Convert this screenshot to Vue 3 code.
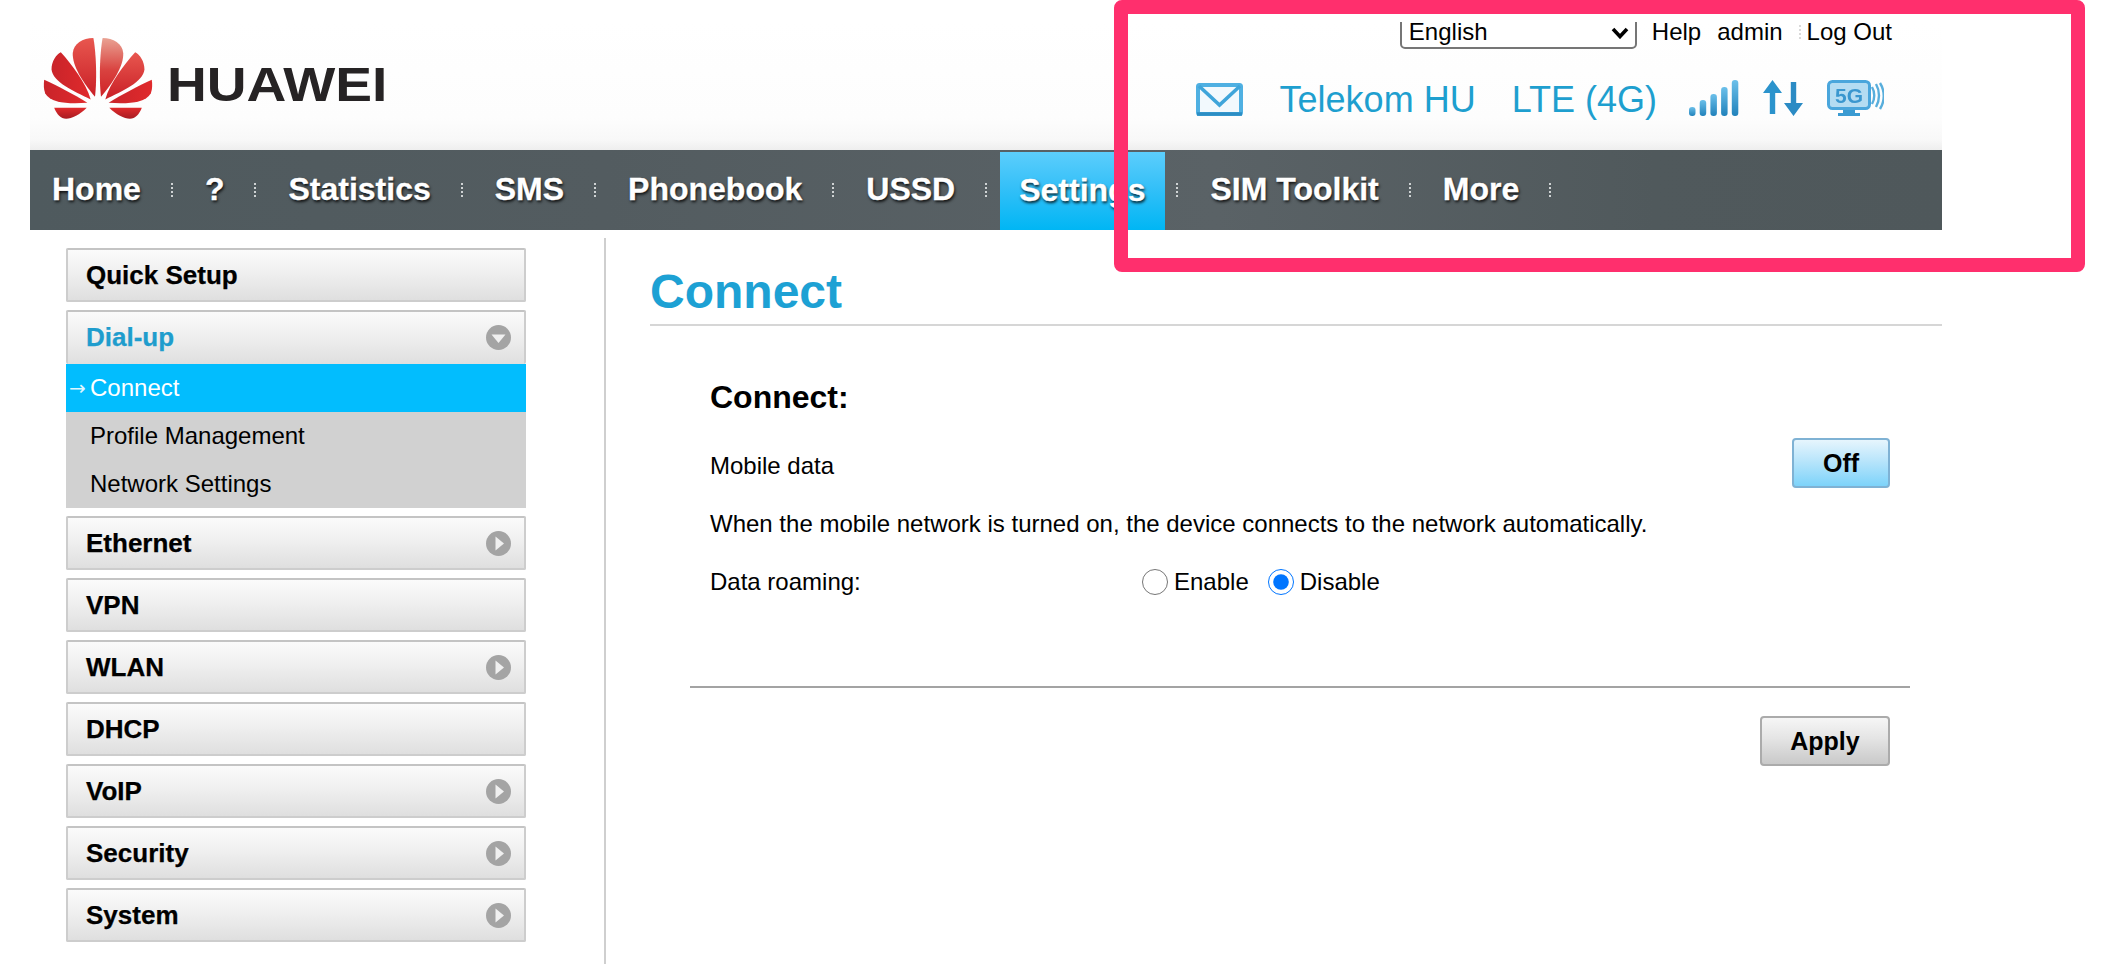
<script setup>
const navItems = [
  { label: 'Home' },
  { label: '?' },
  { label: 'Statistics' },
  { label: 'SMS' },
  { label: 'Phonebook' },
  { label: 'USSD' },
  { label: 'Settings', active: true },
  { label: 'SIM Toolkit' },
  { label: 'More' }
]
const menu = [
  { label: 'Quick Setup' },
  { label: 'Dial-up', open: true, icon: 'down', children: ['Connect', 'Profile Management', 'Network Settings'] },
  { label: 'Ethernet', icon: 'right' },
  { label: 'VPN' },
  { label: 'WLAN', icon: 'right' },
  { label: 'DHCP' },
  { label: 'VoIP', icon: 'right' },
  { label: 'Security', icon: 'right' },
  { label: 'System', icon: 'right' }
]
const bars = [
  { x: 0, h: 9 }, { x: 10.7, h: 16 }, { x: 21.4, h: 22 }, { x: 32.1, h: 29 }, { x: 42.8, h: 36 }
]
</script>

<template>
  <div class="page">
    <div class="frame">
      <header class="header">
        <div class="top-row">
          <div class="select-clip">
            <select class="lang"><option>English</option></select>
            <svg class="lang-chev" viewBox="0 0 18 12" width="18" height="12">
              <path d="M2 2L9 9.5L16 2" fill="none" stroke="#000" stroke-width="3.6" />
            </svg>
          </div>
          <a class="top-link help">Help</a>
          <a class="top-link admin">admin</a>
          <i class="top-sep"></i>
          <a class="top-link logout">Log Out</a>
        </div>
        <div class="brand-row">
          <div class="logo">
            <svg class="flower" viewBox="40 55 328 244" width="110" height="81">
              <defs>
                <linearGradient id="pa" x1="0" y1="0" x2="0" y2="1">
                  <stop offset="0" stop-color="#e8574f" />
                  <stop offset="1" stop-color="#c91f26" />
                </linearGradient>
                <linearGradient id="pb" x1="0" y1="0" x2="0" y2="1">
                  <stop offset="0" stop-color="#e9a293" />
                  <stop offset="0.55" stop-color="#d9423f" />
                  <stop offset="1" stop-color="#cf2227" />
                </linearGradient>
                <linearGradient id="pc" x1="0" y1="0" x2="1" y2="0">
                  <stop offset="0" stop-color="#c9242a" />
                  <stop offset="1" stop-color="#e02a2c" />
                </linearGradient>
                <linearGradient id="pd" x1="0" y1="0" x2="0" y2="1">
                  <stop offset="0" stop-color="#e12a2c" />
                  <stop offset="1" stop-color="#a81c22" />
                </linearGradient>
              </defs>
              <path fill="url(#pa)" d="M195 232C160 190 126 140 128 100C130 72 158 55 190 55C197 90 202 170 195 232Z" />
              <path fill="url(#pb)" d="M213 232C248 190 282 140 280 100C278 72 250 55 218 55C211 90 206 170 213 232Z" />
              <path fill="url(#pc)" d="M182 240C130 215 68 188 64 150C64 125 78 105 92 98C125 135 168 190 182 240Z" />
              <path fill="url(#pa)" d="M226 240C278 215 340 188 344 150C344 125 330 105 316 98C283 135 240 190 226 240Z" />
              <path fill="url(#pc)" d="M172 250C120 254 62 252 45 222C40 208 40 195 42 181C80 198 130 225 172 250Z" />
              <path fill="url(#pc)" d="M236 250C288 254 346 252 363 222C368 208 368 195 366 181C328 198 278 225 236 250Z" />
              <path fill="url(#pd)" d="M72 265L170 265C150 285 125 298 108 298C92 298 80 285 72 265Z" />
              <path fill="url(#pd)" d="M336 265L238 265C258 285 283 298 300 298C316 298 328 285 336 265Z" />
            </svg>
            <span class="wordmark">HUAWEI</span>
          </div>
          <div class="status">
            <svg class="ic-mail" viewBox="0 0 47 33" width="47" height="33">
              <rect x="2" y="2" width="43" height="29" rx="1.5" fill="#f2f9fd" stroke="#4fb0e2" stroke-width="4" />
              <path d="M3 3L23.5 22L44 3" fill="none" stroke="#3fa5da" stroke-width="3.6" />
              <path d="M1 31H46" stroke="#2c8ec4" stroke-width="3.6" />
            </svg>
            <span class="carrier">Telekom HU</span>
            <span class="network">LTE (4G)</span>
            <svg class="ic-signal" viewBox="0 0 50 36" width="50" height="36">
              <defs>
                <linearGradient id="sg" x1="0" y1="0" x2="0" y2="1">
                  <stop offset="0" stop-color="#6cc0ea" />
                  <stop offset="1" stop-color="#2182bb" />
                </linearGradient>
              </defs>
              <rect v-for="b in bars" :key="b.x" :x="b.x" :y="36 - b.h" width="6.5" :height="b.h" rx="3" fill="url(#sg)" />
            </svg>
            <svg class="ic-arrows" viewBox="0 0 40 36" width="40" height="36">
              <path fill="#2b93cc" d="M9.5 0L19 13H12.2V34H6.8V13H0Z" />
              <path fill="#2b8bc4" d="M30.5 36L40 23H33.2V2H27.8V23H21Z" />
            </svg>
            <svg class="ic-5g" viewBox="0 0 57 36" width="57" height="36">
              <rect x="1.5" y="1.5" width="41" height="27" rx="4" fill="#b4dcf2" stroke="#4aa6dc" stroke-width="3" />
              <text x="22" y="23" class="five-g">5G</text>
              <path d="M16 30H28V33H33V36H11V33H16Z" fill="#3b9bd2" />
              <path d="M45 7C48 12 48 19 45 24M49 4C53 11 53 20 49 27M53 3C58 11 58 21 53 29" fill="none" stroke="#58aedc" stroke-width="2.4" />
            </svg>
          </div>
        </div>
      </header>

      <nav class="nav">
        <div v-for="item in navItems" :key="item.label" class="nav-item" :class="{ active: item.active }">
          <a class="nav-link">{{ item.label }}</a>
          <i class="sep"></i>
        </div>
      </nav>

      <div class="body">
        <aside class="aside">
          <div class="menu">
            <template v-for="m in menu" :key="m.label">
              <div class="menu-btn" :class="{ open: m.open }">
                <span>{{ m.label }}</span>
                <span v-if="m.icon" class="chev">
                  <svg viewBox="0 0 25 25" width="25" height="25">
                    <circle cx="12.5" cy="12.5" r="12.5" fill="#a4a4a4" />
                    <path v-if="m.icon === 'down'" d="M5.5 9.5H19.5L12.5 18Z" fill="#f0f0f0" />
                    <path v-else d="M9.5 5.5L18 12.5L9.5 19.5Z" fill="#f0f0f0" />
                  </svg>
                </span>
              </div>
              <div v-if="m.children" class="submenu">
                <div v-for="(c, i) in m.children" :key="c" class="sub-item" :class="{ current: i === 0 }">
                  <span v-if="i === 0" class="sub-arrow">→</span>{{ c }}
                </div>
              </div>
            </template>
          </div>
        </aside>

        <main class="content">
          <h1 class="title">Connect</h1>
          <section class="section">
            <h2 class="section-title">Connect:</h2>
            <div class="row-between">
              <span class="mobile-label">Mobile data</span>
              <button class="btn btn-off" type="button">Off</button>
            </div>
            <p class="note">When the mobile network is turned on, the device connects to the network automatically.</p>
            <div class="roam">
              <span class="roam-label">Data roaming:</span>
              <label class="radio"><input type="radio" name="roam" />Enable</label>
              <label class="radio"><input type="radio" name="roam" checked />Disable</label>
            </div>
            <hr class="rule" />
            <div class="actions">
              <button class="btn btn-apply" type="button">Apply</button>
            </div>
          </section>
        </main>
      </div>
    </div>
    <div class="annotation"></div>
  </div>
</template>

<style>
html, body { background: #fff; overflow: hidden; }
</style>

<style scoped>
.page {
  position: relative;
  height: 964px;
  width: 2126px;
  overflow: hidden;
  padding-top: 22px;
  box-sizing: border-box;
  font-family: "Liberation Sans", Arial, sans-serif;
  font-size: 24px;
  color: #000;
  background: #fff;
}
.frame { margin-left: 30px; width: 1912px; }

.header {
  height: 128px;
  box-sizing: border-box;
  background: linear-gradient(#fff 0%, #fdfdfd 75%, #f8f8f8 92%, #eeeeee 100%);
}
.top-row {
  height: 27px;
  display: flex;
  align-items: flex-start;
  justify-content: flex-end;
  padding-right: 50px;
  line-height: 20px;
}
.select-clip { position: relative; height: 27px; width: 237px; overflow: hidden; margin-right: 15px; }
.lang {
  display: block;
  width: 237px;
  height: 34px;
  margin-top: -7px;
  appearance: none;
  font: 24px "Liberation Sans", Arial, sans-serif;
  color: #000;
  background: #fff;
  border: 2px solid #767676;
  border-radius: 5px;
  padding: 0 0 2px 7px;
}
.lang-chev { position: absolute; right: 8px; top: 5px; display: block; }
.top-link { color: #000; }
.help { margin-right: 16px; }
.top-sep {
  display: block;
  width: 2px;
  height: 15px;
  margin: 3px 6px 0 16px;
  background: repeating-linear-gradient(#d9d9d9 0 2px, transparent 2px 4px);
}

.brand-row {
  height: 101px;
  position: relative;
  display: flex;
  align-items: flex-start;
  justify-content: space-between;
}
.logo { display: flex; align-items: flex-start; margin-left: 13px; }
.flower { display: block; margin-top: -11px; filter: blur(0.4px); }
.wordmark {
  margin: 8px 0 0 14px;
  font-weight: 700;
  font-size: 48px;
  line-height: 56px;
  color: #262324;
  transform: scaleX(1.148);
  transform-origin: left center;
  filter: blur(0.4px);
}
.status {
  display: flex;
  align-items: flex-start;
  padding: 33px 58px 0 0;
  color: #1e9fcf;
  font-size: 36px;
  line-height: 40px;
}
.status svg { display: block; filter: blur(0.4px); }
.ic-mail { margin-top: 1px; }
.carrier { margin: -2px 0 0 37px; }
.network { margin: -2px 0 0 36px; }
.ic-signal { margin: -2px 0 0 32px; }
.ic-arrows { margin: -2px 0 0 24px; }
.ic-5g { margin: -2px 0 0 24px; }
.five-g {
  font: 700 21px "Liberation Sans", Arial, sans-serif;
  fill: #3a97cf;
  text-anchor: middle;
}

.nav {
  height: 80px;
  display: flex;
  align-items: stretch;
  padding-left: 22px;
  background: linear-gradient(90deg, #4f5a5e 0%, #535c60 30%, #5a6266 62%, #50595c 85%, #4f585b 100%);
}
.nav-item { display: flex; align-items: center; }
.nav-link {
  display: block;
  font-weight: 700;
  font-size: 32px;
  line-height: 78px;
  height: 80px;
  color: #fff;
  -webkit-text-stroke: 0.3px #fff;
  text-shadow: 1px 2px 3px rgba(0, 0, 0, 0.85);
}
.sep {
  display: block;
  width: 2px;
  height: 15px;
  margin: 0 32px 0 30px;
  background: repeating-linear-gradient(#cfd3d4 0 2px, transparent 2px 4px);
}
.nav-item.active .nav-link {
  align-self: flex-end;
  height: 78px;
  line-height: 76px;
  padding: 0 20px 0 19px;
  margin-left: -19px;
  background: linear-gradient(#5ccefc 0%, #35c0f8 45%, #00b6f4 100%);
}
.nav-item.active .sep { margin-left: 11px; }

.body { display: flex; height: 734px; }
.aside {
  width: 574px;
  margin-top: 8px;
  border-right: 2px solid #cfcfcf;
  box-sizing: content-box;
}
.menu { margin: 10px 0 0 36px; width: 460px; display: flex; flex-direction: column; gap: 8px; }
.menu-btn {
  height: 54px;
  box-sizing: border-box;
  display: flex;
  align-items: center;
  justify-content: space-between;
  padding: 0 13px 0 18px;
  border: 2px solid #cdcdcd;
  border-top-color: #c4c4c4;
  border-radius: 2px;
  background: linear-gradient(#fbfbfb 0%, #eeeeee 50%, #dfdfdf 100%);
  font-weight: 700;
  font-size: 26px;
  -webkit-text-stroke: 0.25px currentColor;
}
.menu-btn.open { color: #1f9dcd; border-bottom: 0; margin-bottom: -8px; padding-bottom: 2px; }
.chev { display: block; height: 25px; filter: blur(0.4px); }
.chev svg { display: block; }
.submenu { background: #d1d1d1; }
.sub-item {
  position: relative;
  height: 48px;
  line-height: 48px;
  padding-left: 24px;
  font-size: 24px;
  color: #000;
}
.sub-item.current { background: #02bdfe; color: #fff; }
.sub-arrow { position: absolute; left: 3px; top: 0; font: 20px/48px "DejaVu Sans", sans-serif; color: #dff6ff; }

.content { flex: 1; margin-top: 8px; padding: 26px 0 0 44px; min-width: 0; }
.title {
  margin: 0;
  padding-bottom: 4px;
  border-bottom: 2px solid #d6d6d6;
  font-size: 48px;
  line-height: 56px;
  font-weight: 700;
  color: #1da1d4;
}
.section { padding: 51px 52px 0 60px; }
.section-title { margin: 0; font-size: 32px; line-height: 40px; font-weight: 700; }
.row-between {
  margin-top: 21px;
  height: 50px;
  display: flex;
  align-items: center;
  justify-content: space-between;
}
.mobile-label { padding-top: 5px; }
.note { margin: 20px 0 0; line-height: 32px; }
.roam { margin-top: 26px; height: 32px; display: flex; align-items: center; }
.roam-label { width: 432px; }
.radio { display: flex; align-items: center; gap: 6px; margin-right: 19px; }
.radio input { width: 26px; height: 26px; margin: 0; accent-color: #0075ff; }
.rule { margin: 88px -20px 0; height: 2px; border: 0; background: #a3a3a3; }
.actions { margin-top: 28px; display: flex; justify-content: flex-end; }
.btn {
  font: 700 25px "Liberation Sans", Arial, sans-serif;
  height: 50px;
  box-sizing: border-box;
  border-radius: 4px;
  color: #000;
  padding: 0;
}
.btn-off {
  width: 98px;
  border: 2px solid #7fb2d4;
  background: linear-gradient(#e6f5fd 0%, #b9e5fb 45%, #7dd3fa 100%);
}
.btn-apply {
  width: 130px;
  border: 2px solid #ababab;
  background: linear-gradient(#f6f6f6 0%, #e4e4e4 45%, #c9c9c9 100%);
}

.annotation {
  position: absolute;
  left: 1114px;
  top: 0;
  width: 971px;
  height: 272px;
  box-sizing: border-box;
  border: 14px solid #ff2f6d;
  border-radius: 8px;
  pointer-events: none;
}
</style>
